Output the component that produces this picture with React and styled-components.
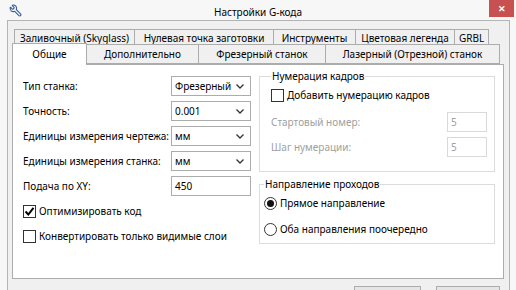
import React from "react";
import styled, { createGlobalStyle } from "styled-components";
import { Wrench } from "lucide-react";

const GlobalStyle = createGlobalStyle`
    html, body {
        margin: 0;
        padding: 0;
    }
    body {
        font-family: "Noto Sans", "Liberation Sans", sans-serif;
        font-size: 10px;
        color: #000;
    }
`;

const frameRows = [
    [
        { title: "Заливочный (Skyglass)", w: 121 },
        { title: "Нулевая точка заготовки", w: 140 },
        { title: "Инструменты", w: 83 },
        { title: "Цветовая легенда", w: 100 },
        { title: "GRBL", w: 35 },
    ],
    [
        { title: "Общие", w: 75, active: true },
        { title: "Дополнительно", w: 113 },
        { title: "Фрезерный станок", w: 128 },
        { title: "Лазерный (Отрезной) станок", w: 175 },
    ],
];

function Chevron() {
    return (
        <svg width="8" height="5" viewBox="0 0 8 5">
            <path d="M0.5 0.5 L4 4 L7.5 0.5" fill="none" stroke="#333" strokeWidth="1.3" />
        </svg>
    );
}

function Check({ checked }) {
    return (
        <Box>
            {checked && (
                <svg width="11" height="11" viewBox="0 0 11 11">
                    <path d="M1.5 5.5 L4.3 8.5 L9.5 1.8" fill="none" stroke="#000" strokeWidth="2" />
                </svg>
            )}
        </Box>
    );
}

function Combo({ value }) {
    return (
        <Select>
            <span>{value}</span>
            <Chevron />
        </Select>
    );
}

function App() {
    return (
        <>
            <GlobalStyle />
            <Window>
                <TitleBar>
                    <Icon>
                        <Wrench size={13} color="#2f5d9a" strokeWidth={2} />
                    </Icon>
                    <Title>Настройки G-кода</Title>
                    <Close>✕</Close>
                </TitleBar>
                <Client>
                    <Tabs>
                        {frameRows.map((row, i) => (
                            <TabRow key={i} $back={i === 0}>
                                {row.map((t) => (
                                    <Tab key={t.title} $w={t.w} $back={i === 0} $active={t.active}>
                                        {t.title}
                                    </Tab>
                                ))}
                            </TabRow>
                        ))}
                    </Tabs>
                    <Panel>
                        <Form>
                            <Label>Тип станка:</Label>
                            <Combo value="Фрезерный" />
                            <Label>Точность:</Label>
                            <Combo value="0.001" />
                            <Label>Единицы измерения чертежа:</Label>
                            <Combo value="мм" />
                            <Label>Единицы измерения станка:</Label>
                            <Combo value="мм" />
                            <Label>Подача по XY:</Label>
                            <Input>450</Input>
                            <CheckRow $span>
                                <Check checked />
                                Оптимизировать код
                            </CheckRow>
                            <CheckRow $span>
                                <Check />
                                Конвертировать только видимые слои
                            </CheckRow>
                        </Form>
                        <Side>
                            <Group $pad={11} $bottom={14}>
                                <Legend>Нумерация кадров</Legend>
                                <CheckRow $top={1}>
                                    <Check />
                                    Добавить нумерацию кадров
                                </CheckRow>
                                <FieldRow $top={7}>
                                    <Label $disabled>Стартовый номер:</Label>
                                    <Input $disabled $w={40}>5</Input>
                                </FieldRow>
                                <FieldRow $top={5}>
                                    <Label $disabled>Шаг нумерации:</Label>
                                    <Input $disabled $w={40}>5</Input>
                                </FieldRow>
                            </Group>
                            <Group $pad={4} $bottom={4} $top={4}>
                                <Legend>Направление проходов</Legend>
                                <CheckRow $top={1}>
                                    <Radio $on />
                                    Прямое направление
                                </CheckRow>
                                <CheckRow $top={6}>
                                    <Radio />
                                    Оба направления поочередно
                                </CheckRow>
                            </Group>
                        </Side>
                    </Panel>
                    <Buttons>
                        <Button $w={65} />
                        <Button $w={62} />
                    </Buttons>
                </Client>
            </Window>
        </>
    );
}
export default App;

const Window = styled.div`
    width: 516px;
    height: 290px;
    overflow: hidden;
    background: #f7f7f7;
    display: flex;
    flex-direction: column;
`;

const TitleBar = styled.div`
    height: 22px;
    display: grid;
    grid-template-columns: 1fr auto 1fr;
    align-items: start;
`;

const Icon = styled.div`
    justify-self: start;
    margin: 4px 0 0 9px;
    transform: scaleX(-1);
    line-height: 0;
`;

const Title = styled.div`
    margin-top: 4px;
    line-height: 16px;
`;

const Close = styled.div`
    justify-self: end;
    width: 25px;
    height: 17px;
    margin-right: 2px;
    background: #c75050;
    color: #fff;
    font-size: 9px;
    font-weight: bold;
    display: flex;
    align-items: center;
    justify-content: center;
`;

const Client = styled.div`
    flex: 1;
    margin: 0 6px 0 7px;
    border: 1px solid #b4b4b4;
    border-bottom: none;
    background: #f0f0f0;
    padding: 8px 5px 0 4px;
`;

const Tabs = styled.div`
    display: flex;
    flex-direction: column;
`;

const TabRow = styled.div`
    display: flex;
    height: ${(p) => (p.$back ? 16 : 19)}px;
    margin-left: ${(p) => (p.$back ? 2 : 0)}px;
    align-items: flex-end;
`;

const Tab = styled.div`
    box-sizing: border-box;
    width: ${(p) => p.$w}px;
    height: ${(p) => (p.$active ? 22 : p.$back ? 17 : 20)}px;
    margin-bottom: ${(p) => (p.$active || p.$back ? -1 : 0)}px;
    margin-right: -1px;
    border: 1px solid #acacac;
    border-bottom: ${(p) => (p.$active ? "none" : "1px solid #acacac")};
    background: ${(p) => (p.$active ? "#fff" : "#f0f0f0")};
    position: relative;
    z-index: ${(p) => (p.$active ? 2 : 1)};
    display: flex;
    align-items: center;
    justify-content: center;
    padding-bottom: ${(p) => (p.$active ? 2 : 0)}px;
    white-space: nowrap;
`;

const Panel = styled.div`
    box-sizing: border-box;
    height: 215px;
    border: 1px solid #acacac;
    background: #fff;
    padding: 11px 8px 0 10px;
    display: grid;
    grid-template-columns: 228px 236px;
    column-gap: 8px;
    align-items: start;
`;

const Form = styled.div`
    display: grid;
    grid-template-columns: 148px 80px;
    grid-auto-rows: 20px;
    row-gap: 5px;
    align-items: center;
`;

const Label = styled.div`
    color: ${(p) => (p.$disabled ? "#a0a0a0" : "#000")};
    white-space: nowrap;
`;

const Select = styled.div`
    box-sizing: border-box;
    height: 20px;
    border: 1px solid #acacac;
    background: #fff;
    display: flex;
    align-items: center;
    justify-content: space-between;
    padding: 0 6px 0 3px;
`;

const Input = styled.div`
    box-sizing: border-box;
    height: 20px;
    width: ${(p) => (p.$w ? `${p.$w}px` : "auto")};
    border: 1px solid ${(p) => (p.$disabled ? "#d9d9d9" : "#acacac")};
    color: ${(p) => (p.$disabled ? "#a0a0a0" : "#000")};
    display: flex;
    align-items: center;
    padding-left: 3px;
`;

const CheckRow = styled.div`
    grid-column: ${(p) => (p.$span ? "1 / -1" : "auto")};
    height: 20px;
    margin-top: ${(p) => p.$top || 0}px;
    display: flex;
    align-items: center;
    gap: 3px;
    white-space: nowrap;
`;

const Box = styled.div`
    box-sizing: border-box;
    flex-shrink: 0;
    width: 13px;
    height: 13px;
    border: 1px solid #333;
    background: #fff;
    display: flex;
    align-items: center;
    justify-content: center;
`;

const Radio = styled.div`
    box-sizing: border-box;
    flex-shrink: 0;
    width: 13px;
    height: 13px;
    border: 1px solid #333;
    border-radius: 50%;
    background: #fff;
    display: flex;
    align-items: center;
    justify-content: center;
    &::after {
        content: "";
        width: 7px;
        height: 7px;
        border-radius: 50%;
        background: ${(p) => (p.$on ? "#111" : "transparent")};
    }
`;

const Side = styled.div`
    margin-top: -8px;
    display: flex;
    flex-direction: column;
`;

const Group = styled.fieldset`
    margin: ${(p) => p.$top || 0}px 0 0;
    border: 1px solid #dcdcdc;
    padding: 0 7px ${(p) => p.$bottom}px ${(p) => p.$pad}px;
    min-width: 0;
`;

const Legend = styled.legend`
    padding: 0 1px;
    line-height: 16px;
`;

const FieldRow = styled.div`
    display: flex;
    justify-content: space-between;
    align-items: center;
    height: 20px;
    margin-top: ${(p) => p.$top}px;
`;

const Buttons = styled.div`
    display: flex;
    justify-content: flex-end;
    gap: 15px;
    margin: 7px 4px 0 0;
`;

const Button = styled.div`
    width: ${(p) => p.$w}px;
    height: 22px;
    border: 1px solid #acacac;
    background: #e5e5e5;
`;
